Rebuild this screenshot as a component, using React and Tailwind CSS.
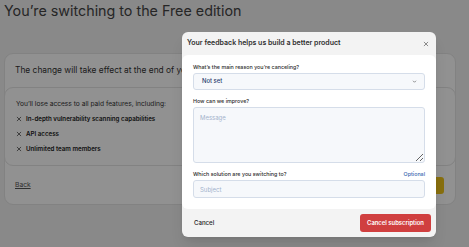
import React from 'react';

const XMark = ({ className = '' }) => (
  <svg viewBox="0 0 10 10" className={className} fill="none" stroke="currentColor" strokeWidth="1.4" strokeLinecap="round">
    <path d="M2 2l6 6M8 2L2 8" />
  </svg>
);

const FEATURES = [
  'In-depth vulnerability scanning capabilities',
  'API access',
  'Unlimited team members',
];

const App = () => {
  return (
    <div
      className="relative w-[469px] h-[247px] overflow-hidden bg-[#f1f1f1] text-[#333]"
      style={{ fontFamily: 'Inter, "Noto Sans", sans-serif' }}
    >
      {/* page under the overlay */}
      <h1 className="pl-[4px] text-[14.3px] leading-[22px] font-normal text-[#444]">
        You’re switching to the Free edition
      </h1>

      <div className="mt-[31px] ml-[4px] w-[452px] bg-white border border-[#e4e4e4] rounded-[9px]">
        <div className="h-[33px] flex items-center px-[10px] text-[8.4px] text-[#333]">
          The change will take effect at the end of your current billing period.
        </div>
        <div className="-mx-px border border-[#e4e4e4] rounded-[9px] px-[11px] pt-[10px] pb-[9px]">
          <p className="text-[6.65px] leading-[12px] text-[#333]">You’ll lose access to all paid features, including:</p>
          <ul className="mt-[1px]">
            {FEATURES.map((f) => (
              <li key={f} className="flex items-center gap-[4px] h-[15px] text-[6.2px] font-semibold text-[#222]">
                <XMark className="w-[6px] h-[6px] text-[#555]" />
                {f}
              </li>
            ))}
          </ul>
        </div>
        <div className="h-[38px] flex items-center justify-between pl-[10px] pr-[11px]">
          <span className="text-[6.7px] underline text-[#555]">Back</span>
          <span className="h-[17px] px-[12px] rounded-[3px] bg-[#f0c419] text-[7px] font-semibold flex items-center">
            Switch to Free
          </span>
        </div>
      </div>

      {/* dim overlay */}
      <div className="absolute inset-0 bg-black/[0.43]" />

      {/* feedback modal */}
      <div className="absolute top-[32px] left-[182px] w-[254px] rounded-[6px] bg-[#f3f3f3] shadow-lg overflow-hidden">
        <div className="h-[23px] flex items-center justify-between pl-[5px] pr-[7px]">
          <h2 className="text-[7px] font-semibold text-[#2e2e2e]">Your feedback helps us build a better product</h2>
          <XMark className="w-[6px] h-[6px] text-[#777]" />
        </div>

        <div className="bg-white rounded-[6px] px-[11px] pt-[9px] pb-[11px]">
          <label className="block text-[5.35px] leading-[7px] font-medium text-[#2b2b2b]">
            What’s the main reason you’re canceling?
          </label>
          <div className="mt-[2px] h-[17px] flex items-center justify-between pl-[8px] pr-[7px] rounded-[3px] bg-[#f6f8fb] border border-[#d5dde9]">
            <span className="text-[5.9px] font-medium text-[#1f3a6b]">Not set</span>
            <svg viewBox="0 0 10 10" className="w-[5px] h-[5px] text-[#555]" fill="none" stroke="currentColor" strokeWidth="1.3">
              <path d="M2 3.5l3 3 3-3" />
            </svg>
          </div>

          <label className="block mt-[8px] text-[5.35px] leading-[7px] font-medium text-[#2b2b2b]">How can we improve?</label>
          <textarea
            placeholder="Message"
            className="mt-[2px] block w-full h-[56px] px-[6px] py-[5px] rounded-[3px] bg-[#f6f8fb] border border-[#d5dde9] text-[6px] placeholder:text-[#a3b3cc] outline-none"
          />

          <div className="mt-[8px] flex items-center justify-between text-[5.35px] leading-[7px] font-medium">
            <label className="text-[#2b2b2b]">Which solution are you switching to?</label>
            <span className="text-[#3c69b0]">Optional</span>
          </div>
          <input
            placeholder="Subject"
            className="mt-[2px] block w-full h-[18px] px-[6px] rounded-[3px] bg-[#f6f8fb] border border-[#d5dde9] text-[6px] placeholder:text-[#a3b3cc] outline-none"
          />
        </div>

        <div className="h-[28px] flex items-center justify-between pl-[12px] pr-[5px]">
          <span className="text-[6.1px] font-medium text-[#222]">Cancel</span>
          <button className="h-[18px] w-[71px] rounded-[3px] bg-[#d03f3f] text-white text-[5.9px] font-semibold">
            Cancel subscription
          </button>
        </div>
      </div>
    </div>
  );
};

export default App;
